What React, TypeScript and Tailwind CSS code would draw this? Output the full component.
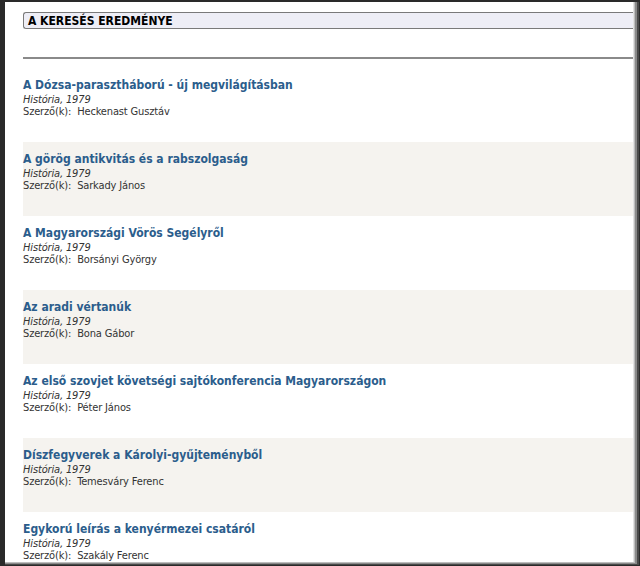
const results = [
  { title: "A Dózsa-parasztháború - új megvilágításban", author: "Heckenast Gusztáv" },
  { title: "A görög antikvitás és a rabszolgaság", author: "Sarkady János" },
  { title: "A Magyarországi Vörös Segélyről", author: "Borsányi György" },
  { title: "Az aradi vértanúk", author: "Bona Gábor" },
  { title: "Az első szovjet követségi sajtókonferencia Magyarországon", author: "Péter János" },
  { title: "Díszfegyverek a Károlyi-gyűjteményből", author: "Temesváry Ferenc" },
  { title: "Egykorú leírás a kenyérmezei csatáról", author: "Szakály Ferenc" },
];

export default function App() {
  return (
    <main
      className="w-[640px] h-[566px] overflow-hidden bg-[#2a2a2a] pl-[5px] pt-[2px] pr-[1px] pb-[1px] flex"
      style={{ fontFamily: "Tahoma, 'DejaVu Sans Condensed', 'DejaVu Sans', sans-serif" }}
    >
      {/* window shadow layers on the right and bottom edge */}
      <div className="flex-1 flex bg-[#4a4a4a] pr-[2px] pb-[1px]">
        <div className="flex-1 flex bg-[#8a8a8a] pr-[2px] pb-[1px]">
          <div className="flex-1 flex bg-[#bdbdbd] pr-[1px] pb-[1px]">
            <div className="flex-1 flex bg-[#e2e2e2] pr-[1px]">
              <div className="flex-1 bg-white overflow-hidden">
                <div className="pl-[18px] pt-[10px]">
                  <div className="h-[17px] bg-[#eeeef6] border border-[#7a7a7a] border-r-0 rounded-l-[3px] pl-[4px] flex items-center text-[12px] leading-none font-bold text-black">
                    A KERESÉS EREDMÉNYE
                  </div>
                  <div className="mt-[28px] h-[2px] bg-[#8a8a8a]" />
                  <div className="mt-[9px]">
                    {results.map((r, i) => (
                      <div
                        key={i}
                        className={`h-[74px] pt-[9px] ${i % 2 === 1 ? "bg-[#f5f3ef]" : "bg-white"}`}
                      >
                        <div className="text-[12px] leading-[17px] font-bold text-[#2b5d8c]">
                          {r.title}
                        </div>
                        <div className="text-[11px] leading-[12px] italic text-[#333] tracking-[-0.15px]">
                          História, 1979
                        </div>
                        <div className="text-[11px] leading-[12px] text-[#333] tracking-[-0.15px]">
                          Szerző(k):&nbsp; {r.author}
                        </div>
                      </div>
                    ))}
                  </div>
                </div>
              </div>
            </div>
          </div>
        </div>
      </div>
    </main>
  );
}
